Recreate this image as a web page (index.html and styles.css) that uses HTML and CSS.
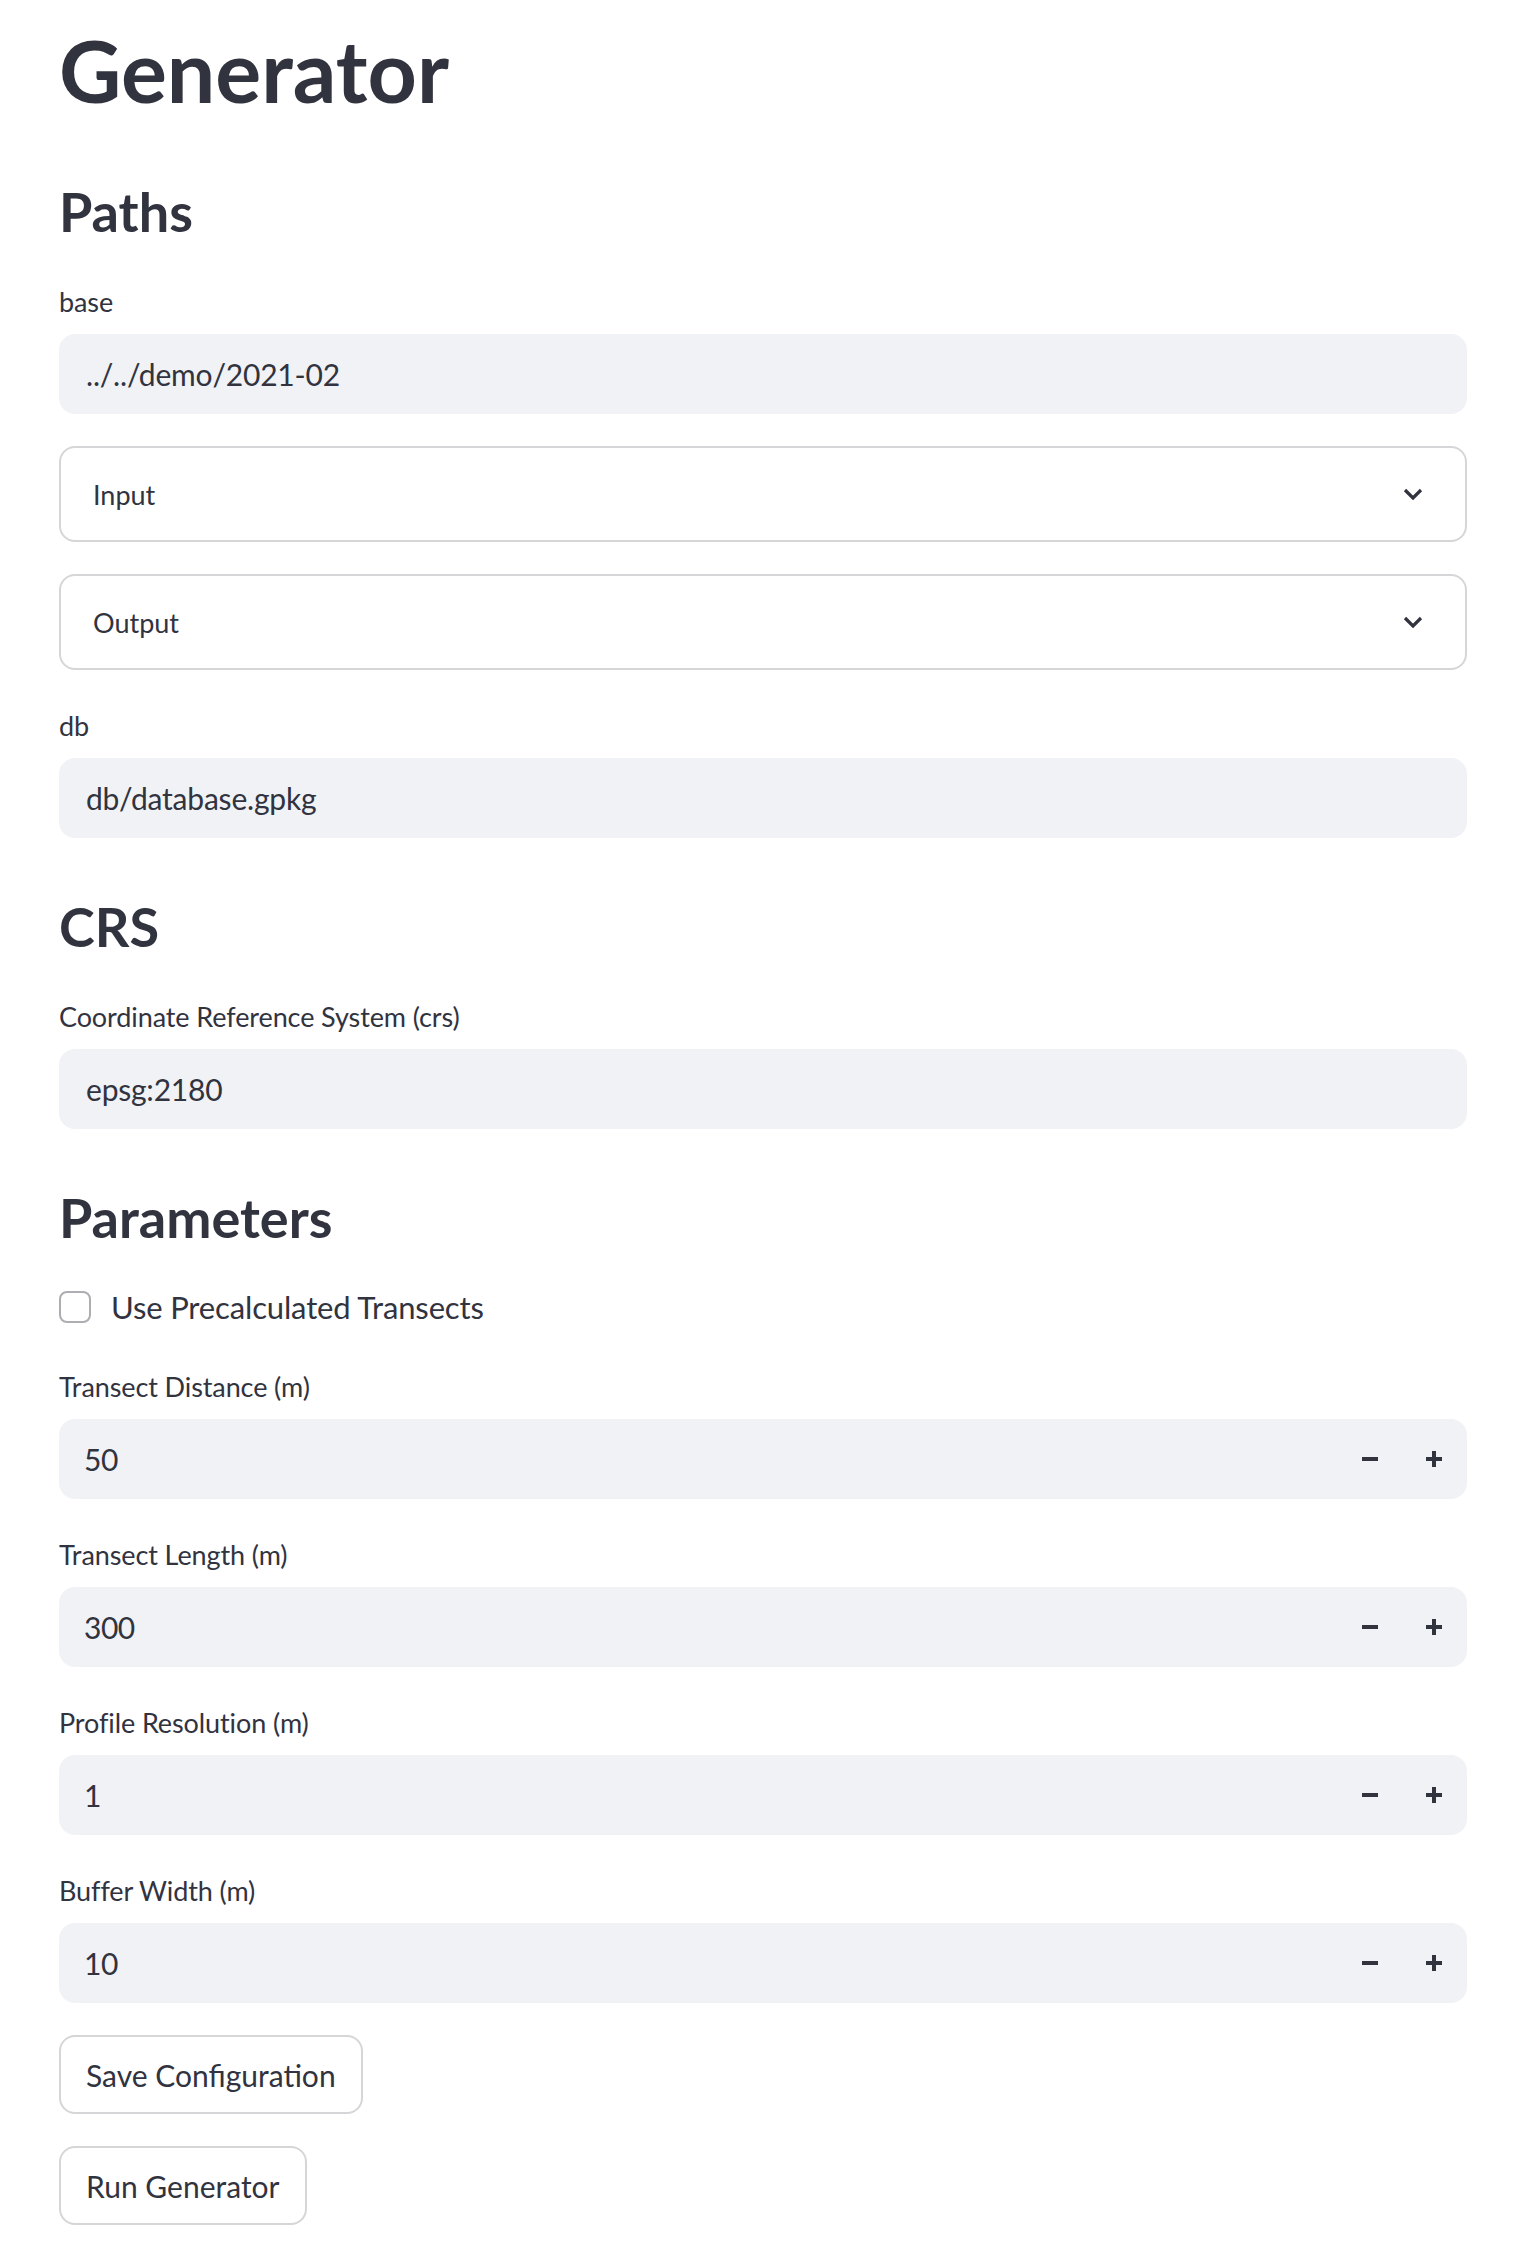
FILE: index.html
```html
<!DOCTYPE html>
<html lang="en">
<head>
    <meta charset="UTF-8">
    <meta name="viewport" content="width=device-width, initial-scale=1.0">
    <title>Generator</title>
    <link rel="stylesheet" href="styles.css">
</head>
<body>

<div class="main">
    <h1 class="title">Generator</h1>

    <h2 class="section">Paths</h2>

    <div class="field">
        <label for="base">base</label>
        <input class="text-input" type="text" id="base" value="../../demo/2021-02">
    </div>

    <details class="expander">
        <summary>
            <span>Input</span>
            <svg class="chevron" width="20" height="12" viewBox="0 0 20 12"><polyline points="2,2 10,10 18,2"/></svg>
        </summary>
    </details>

    <details class="expander">
        <summary>
            <span>Output</span>
            <svg class="chevron" width="20" height="12" viewBox="0 0 20 12"><polyline points="2,2 10,10 18,2"/></svg>
        </summary>
    </details>

    <div class="field">
        <label for="db">db</label>
        <input class="text-input" type="text" id="db" value="db/database.gpkg">
    </div>

    <h2 class="section">CRS</h2>

    <div class="field">
        <label for="crs">Coordinate Reference System (crs)</label>
        <input class="text-input" type="text" id="crs" value="epsg:2180">
    </div>

    <h2 class="section">Parameters</h2>

    <label class="checkbox">
        <span class="box"></span>
        <span>Use Precalculated Transects</span>
    </label>

    <div class="field">
        <label for="distance">Transect Distance (m)</label>
        <div class="number-input">
            <input type="text" id="distance" value="50">
            <button class="step" type="button"><svg width="16" height="16" viewBox="0 0 16 16"><rect x="0" y="6" width="16" height="4"/></svg></button>
            <button class="step" type="button"><svg width="16" height="16" viewBox="0 0 16 16"><rect x="0" y="6" width="16" height="4"/><rect x="6" y="0" width="4" height="16"/></svg></button>
        </div>
    </div>

    <div class="field">
        <label for="length">Transect Length (m)</label>
        <div class="number-input">
            <input type="text" id="length" value="300">
            <button class="step" type="button"><svg width="16" height="16" viewBox="0 0 16 16"><rect x="0" y="6" width="16" height="4"/></svg></button>
            <button class="step" type="button"><svg width="16" height="16" viewBox="0 0 16 16"><rect x="0" y="6" width="16" height="4"/><rect x="6" y="0" width="4" height="16"/></svg></button>
        </div>
    </div>

    <div class="field">
        <label for="resolution">Profile Resolution (m)</label>
        <div class="number-input">
            <input type="text" id="resolution" value="1">
            <button class="step" type="button"><svg width="16" height="16" viewBox="0 0 16 16"><rect x="0" y="6" width="16" height="4"/></svg></button>
            <button class="step" type="button"><svg width="16" height="16" viewBox="0 0 16 16"><rect x="0" y="6" width="16" height="4"/><rect x="6" y="0" width="4" height="16"/></svg></button>
        </div>
    </div>

    <div class="field">
        <label for="buffer">Buffer Width (m)</label>
        <div class="number-input">
            <input type="text" id="buffer" value="10">
            <button class="step" type="button"><svg width="16" height="16" viewBox="0 0 16 16"><rect x="0" y="6" width="16" height="4"/></svg></button>
            <button class="step" type="button"><svg width="16" height="16" viewBox="0 0 16 16"><rect x="0" y="6" width="16" height="4"/><rect x="6" y="0" width="4" height="16"/></svg></button>
        </div>
    </div>

    <button class="button" type="button">Save Configuration</button>
    <button class="button" type="button">Run Generator</button>
</div>

</body>
</html>
```

FILE: styles.css
```css
body {
    margin: 0;
    font-family: Lato, "Liberation Sans", sans-serif;
    color: #31333f;
    background-color: #ffffff;
}

.main {
    width: 1408px;
    margin-left: 59px;
    display: flex;
    flex-direction: column;
    gap: 32px;
}

.title {
    margin: 0;
    padding: 19px 0 3px;
    font-size: 86px;
    line-height: 101px;
    font-weight: 700;
}

.section {
    margin: 0;
    padding: 24px 0 2px;
    font-size: 54px;
    line-height: 65px;
    font-weight: 700;
}

.field label {
    display: block;
    height: 48px;
    line-height: 48px;
    margin-bottom: 8px;
    font-size: 27px;
    letter-spacing: -0.1px;
}

.text-input {
    box-sizing: border-box;
    display: block;
    width: 100%;
    height: 80px;
    padding: 0 27px;
    border: none;
    border-radius: 16px;
    background-color: #f0f2f6;
    font-family: inherit;
    font-size: 30px;
    letter-spacing: -0.2px;
    color: #31333f;
    outline: none;
}

/* expanders */
.expander {
    border: 2px solid #d6d6d9;
    border-radius: 16px;
}

.expander summary {
    height: 92px;
    display: flex;
    align-items: center;
    justify-content: space-between;
    padding: 0 42px 0 32px;
    font-size: 27px;
    list-style: none;
    cursor: pointer;
}

.expander summary::-webkit-details-marker {
    display: none;
}

.chevron polyline {
    fill: none;
    stroke: #31333f;
    stroke-width: 3.2;
}

/* checkbox */
.checkbox {
    display: flex;
    align-items: flex-start;
    gap: 20px;
    height: 47px;
    line-height: 47px;
    font-size: 31px;
    letter-spacing: -0.15px;
}

.box {
    box-sizing: border-box;
    width: 32px;
    height: 32px;
    margin-top: 7px;
    border: 2px solid #adadb2;
    border-radius: 8px;
}

/* number inputs */
.number-input {
    display: flex;
    height: 80px;
    border-radius: 16px;
    background-color: #f0f2f6;
}

.number-input input {
    flex: 1;
    min-width: 0;
    padding: 0 25px;
    border: none;
    background: transparent;
    font-family: inherit;
    font-size: 30px;
    letter-spacing: -0.5px;
    color: #31333f;
    outline: none;
}

.step {
    width: 64px;
    display: flex;
    align-items: center;
    justify-content: center;
    padding: 0;
    border: none;
    background: transparent;
    cursor: pointer;
}

.step:last-child {
    margin-right: 1px;
}

.step svg {
    fill: #31333f;
}

/* buttons */
.button {
    align-self: flex-start;
    height: 79px;
    padding: 0 25px;
    border: 2px solid #d6d6d9;
    border-radius: 16px;
    background-color: #ffffff;
    font-family: inherit;
    font-size: 30px;
    color: #31333f;
    cursor: pointer;
}

.button:hover {
    border-color: #ff4b4b;
    color: #ff4b4b;
}
```
